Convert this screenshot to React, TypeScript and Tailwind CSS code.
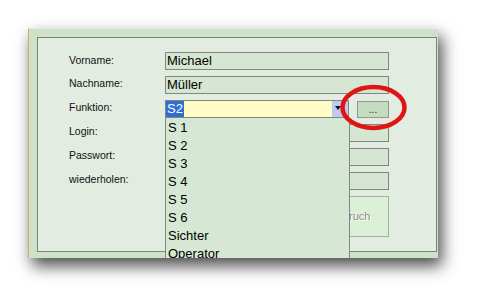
import React from "react";

const rows = [
  { label: "Vorname:", value: "Michael" },
  { label: "Nachname:", value: "Müller" },
  { label: "Funktion:", value: null },
  { label: "Login:", value: "" },
  { label: "Passwort:", value: "" },
  { label: "wiederholen:", value: "" },
];

const options = ["S 1", "S 2", "S 3", "S 4", "S 5", "S 6", "Sichter", "Operator"];

function Combo() {
  return (
    <div className="flex items-stretch">
      <div className="w-[184px] h-[18px] flex border border-[#7f877e] bg-[#fffcc6]">
        <div className="flex-1 flex items-stretch">
          <span className="bg-[#2f6fd3] text-white text-[13px] leading-[16px] px-[1px] w-[18px]">S2</span>
        </div>
        <div className="w-[16px] bg-[#bccbef] relative">
          <svg className="absolute left-[3px] top-[5px]" width="6" height="5" viewBox="0 0 6 5">
            <path d="M0 0h6L3 4z" fill="#111" />
          </svg>
        </div>
      </div>
      <button className="ml-[8px] w-[32px] h-[17px] mt-[1px] border border-[#8c9a8a] bg-[#c6dcc1] text-[10px] leading-[12px] text-[#222]">
        ...
      </button>
    </div>
  );
}

export default function App() {
  return (
    <div className="w-[480px] h-[301px] bg-white overflow-hidden relative pt-[28px] pl-[28px] font-['Liberation_Sans',Arial,sans-serif]">
      <div className="w-[410px] h-[230px] relative overflow-hidden bg-[#cee2c9] border-l border-l-[#d3ab68] border-t border-t-[#e4eee2] shadow-[4px_8px_15px_rgba(0,0,0,0.7)] pt-[8px] pl-[8px] pr-[1px] pb-[6px]">
        <div className="h-full border border-[#7b8379] bg-[#e2ece0] pt-[14px] pl-[31px]">
          {rows.map((r, i) => (
            <div key={r.label} className="flex items-center h-[18px] mb-[6px]">
              <span className={`w-[96px] text-[10.5px] text-[#111] ${i === 0 ? "" : "-mt-[3px]"}`}>
                {r.label}
              </span>
              {r.value === null ? (
                <Combo />
              ) : (
                <div className="w-[224px] h-[18px] border border-[#7f877e] bg-[#d5e7d2] text-[13px] leading-[16px] pl-[1px] text-black">
                  {r.value}
                </div>
              )}
            </div>
          ))}
          <div className="pl-[242px]">
            <div className="w-[78px] h-[41px] border border-[#a3afa1] bg-[#dbf0d7] flex items-center justify-center text-[11px] text-[#8a8a8a] [text-shadow:1px_1px_0_#fff]">
              Abbruch
            </div>
          </div>
        </div>

        <div className="absolute left-[136px] top-[89px] w-[185px] h-[160px] border-x border-[#7f877e] bg-[#d6e7d3] pt-[1px]">
          {options.map((o) => (
            <div key={o} className="h-[18px] text-[13px] leading-[18px] pl-[2px] text-black">
              {o}
            </div>
          ))}
        </div>
      </div>

      <svg className="absolute left-[338px] top-[83px]" width="72" height="50" viewBox="0 0 72 50">
        <ellipse cx="35.5" cy="24.5" rx="31" ry="20.5" fill="none" stroke="#e01414" strokeWidth="4.5" />
      </svg>
    </div>
  );
}
